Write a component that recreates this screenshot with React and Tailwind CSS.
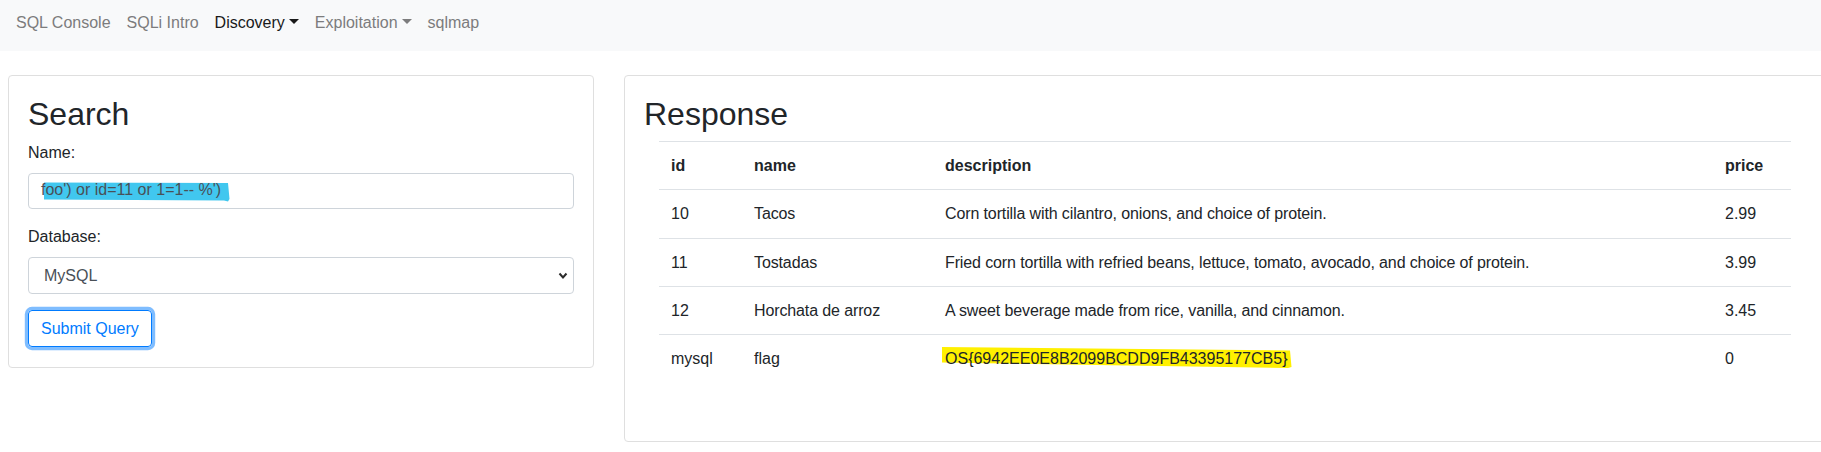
import React from 'react';

const rows = [
  { id: '10', name: 'Tacos', description: 'Corn tortilla with cilantro, onions, and choice of protein.', price: '2.99', h: 'h-[49px]' },
  { id: '11', name: 'Tostadas', description: 'Fried corn tortilla with refried beans, lettuce, tomato, avocado, and choice of protein.', price: '3.99', h: 'h-[48px]' },
  { id: '12', name: 'Horchata de arroz', description: 'A sweet beverage made from rice, vanilla, and cinnamon.', price: '3.45', h: 'h-[48px]' },
];

const cols = 'grid grid-cols-[83px_191px_780px_78px]';

const Caret = () => (
  <span className="inline-block ml-[4px] align-[4px] w-0 h-0 border-t-[5px] border-t-current border-x-[5px] border-x-transparent" />
);

const NavLink = ({ children, active, caret }) => (
  <a href="#" className={`px-2 py-2 leading-6 whitespace-nowrap ${active ? 'text-[#191919]' : 'text-[#7c7c7d]'}`}>
    {children}
    {caret && <Caret />}
  </a>
);

export default function App() {
  return (
    <div className="w-full h-[452px] overflow-hidden bg-white text-[16px] text-[#212529] font-['Liberation_Sans',Arial,sans-serif]">
      {/* navbar */}
      <nav className="h-[51px] bg-[#f8f9fa] flex items-start pt-[3px] pl-2">
        <NavLink>SQL Console</NavLink>
        <NavLink>SQLi Intro</NavLink>
        <NavLink active caret>Discovery</NavLink>
        <NavLink caret>Exploitation</NavLink>
        <NavLink>sqlmap</NavLink>
      </nav>

      <div className="flex items-start gap-[30px] mt-[24px] pl-2">
        {/* Search card */}
        <div className="w-[586px] shrink-0 border border-[#dfdfdf] rounded-[4px] px-[19px] pt-[19px] pb-[20px]">
          <h2 className="text-[32px] leading-[38px] font-normal mb-2">Search</h2>
          <label className="block leading-6 mb-2">Name:</label>
          <div className="relative h-[36px] border border-[#ced4da] rounded-[4px]">
            <svg className="absolute left-0 top-0" width="230" height="34" viewBox="0 0 230 34">
              <polygon points="15,8.5 199,9 200.5,25 199,27.5 195,26.5 15,25.5" fill="#41c7ef" />
            </svg>
            <div className="relative h-full flex items-center pl-[12px] pb-[2px] text-[#495057] whitespace-nowrap">
              foo') or id=11 or 1=1-- %')
            </div>
          </div>
          <label className="block leading-6 mt-4 mb-2">Database:</label>
          <div className="relative h-[37px] border border-[#ced4da] rounded-[4px]">
            <select className="w-full h-full appearance-none bg-transparent pl-[15px] text-[#495057] outline-none">
              <option>MySQL</option>
            </select>
            <svg className="absolute right-[5px] top-[14px] pointer-events-none" width="10" height="8" viewBox="0 0 10 8">
              <polyline points="1.5,1.5 5,5.5 8.5,1.5" fill="none" stroke="#2b2b2b" strokeWidth="2" />
            </svg>
          </div>
          <button className="mt-4 h-[37px] px-3 border border-[#007bff] rounded-[4px] text-[#007bff] shadow-[0_0_0_3.2px_rgba(0,123,255,0.5)]">
            Submit Query
          </button>
        </div>

        {/* Response card */}
        <div className="w-[1201px] h-[367px] shrink-0 border border-[#dfdfdf] rounded-[4px] px-[19px] pt-[19px]">
          <h2 className="text-[32px] leading-[38px] font-normal mb-2">Response</h2>
          <div className="mx-[15px] w-[1132px]">
            <div className={`${cols} h-[48px] items-center border-t border-[#dee2e6] font-bold`}>
              <div className="px-3">id</div>
              <div className="px-3">name</div>
              <div className="px-3">description</div>
              <div className="px-3">price</div>
            </div>
            {rows.map((r) => (
              <div key={r.id} className={`${cols} ${r.h} items-center border-t border-[#dee2e6]`}>
                <div className="px-3">{r.id}</div>
                <div className="px-3 tracking-[-0.12px]">{r.name}</div>
                <div className="px-3 whitespace-nowrap tracking-[-0.12px]">{r.description}</div>
                <div className="px-3">{r.price}</div>
              </div>
            ))}
            <div className={`${cols} border-t border-[#dee2e6] pt-3 leading-6`}>
              <div className="px-3">mysql</div>
              <div className="px-3">flag</div>
              <div className="relative px-3">
                <svg className="absolute left-0 top-[-13px]" width="370" height="40" viewBox="0 0 370 40">
                  <polygon points="9,13 357,16.5 358.5,33 355,34 9,28.5" fill="#fff000" />
                </svg>
                <span className="relative">OS{'{'}6942EE0E8B2099BCDD9FB43395177CB5{'}'}</span>
              </div>
              <div className="px-3">0</div>
            </div>
          </div>
        </div>
      </div>
    </div>
  );
}
